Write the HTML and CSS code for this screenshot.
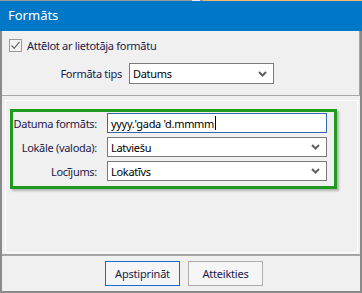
FILE: index.html
```html
<!DOCTYPE html>
<html lang="lv">
<head>
    <meta charset="UTF-8">
    <title>Formāts</title>
    <link rel="stylesheet" href="styles.css">
</head>
<body>
    <div class="strip"><span class="strip-mark"></span><span class="strip-orange"></span></div>
    <div class="titlebar">Formāts</div>
    <div class="frame">
        <div class="top">
            <label class="check-row">
                <span class="checkbox">
                    <svg width="11" height="11" viewBox="0 0 11 11"><polyline points="1.5,5.5 4.2,8.3 9.5,1.8" fill="none" stroke="#6d6d6d" stroke-width="1.3"/></svg>
                </span>
                Attēlot ar lietotāja formātu
            </label>
            <div class="type-row">
                <span class="label">Formāta tips</span>
                <div class="combo combo-type">
                    <span>Datums</span>
                    <svg class="chev" width="9" height="6" viewBox="0 0 9 6"><polyline points="1,1 4.5,4.5 8,1" fill="none" stroke="#606060" stroke-width="2"/></svg>
                </div>
            </div>
        </div>

        <div class="panel">
            <div class="green-box">
                <span class="label">Datuma formāts:</span>
                <div class="field focused">yyyy.'gada 'd.mmmm<span class="caret"></span></div>

                <span class="label">Lokāle (valoda):</span>
                <div class="combo">
                    <span>Latviešu</span>
                    <svg class="chev" width="9" height="6" viewBox="0 0 9 6"><polyline points="1,1 4.5,4.5 8,1" fill="none" stroke="#606060" stroke-width="2"/></svg>
                </div>

                <span class="label">Locījums:</span>
                <div class="combo">
                    <span>Lokatīvs</span>
                    <svg class="chev" width="9" height="6" viewBox="0 0 9 6"><polyline points="1,1 4.5,4.5 8,1" fill="none" stroke="#606060" stroke-width="2"/></svg>
                </div>
            </div>
        </div>

        <div class="buttons">
            <button class="btn btn-default">Apstiprināt</button>
            <button class="btn">Atteikties</button>
        </div>
    </div>
</body>
</html>
```

FILE: styles.css
```css
body {
    margin: 0;
    background: #f0f0f0;
    font-family: "Noto Sans", "Open Sans", sans-serif;
    font-size: 11px;
    letter-spacing: -0.3px;
    color: #1b1b4b;
    width: 362px;
    height: 293px;
    overflow: hidden;
}

.strip {
    height: 1px;
    background: #9a9a9a;
    display: flex;
}

.strip-mark {
    margin-left: 192px;
    width: 8px;
    background: #e8eef8;
}

.strip-orange {
    margin-left: 3px;
    flex: 1;
    background: #f3b86b;
}

.titlebar {
    height: 30px;
    line-height: 29px;
    background: #0078c8;
    color: #fff;
    font-size: 13px;
    letter-spacing: 0;
    padding-left: 8px;
}

.frame {
    border: 2px solid #8a8a8a;
    border-top: none;
    height: 260px;
}

.top {
    height: 65px;
    border-bottom: 1px solid #a6a6a6;
    border-right: 1px solid #a6a6a6;
    padding-top: 8px;
    box-sizing: border-box;
}

.check-row {
    display: flex;
    align-items: center;
    gap: 5px;
    padding-left: 7px;
    height: 13px;
    white-space: nowrap;
}

.checkbox {
    width: 11px;
    height: 11px;
    border: 1px solid #9b9b9b;
    background: #f4f4f4;
    display: flex;
}

.type-row {
    display: flex;
    align-items: center;
    margin-top: 11px;
    padding-left: 57px;
}

.label {
    white-space: nowrap;
}

.type-row .label {
    width: 63px;
    margin-right: 7px;
    text-align: right;
}

.combo,
.field {
    height: 19px;
    border: 1px solid #7a7a7a;
    background: #fff;
    color: #000;
    display: flex;
    align-items: center;
    padding: 0 6px 0 3px;
    white-space: nowrap;
}

.combo span {
    flex: 1;
}

.combo-type {
    width: 134px;
}

.panel {
    margin: 4px 2px 0 3px;
    height: 153px;
    border: 1px solid #fff;
    box-sizing: border-box;
    padding: 8px 0 0 4px;
}

.green-box {
    width: 314px;
    border: 3px solid #1e9b1e;
    box-shadow: 2px 2px 2px rgba(0, 0, 0, 0.25);
    display: grid;
    grid-template-columns: 84px 220px;
    column-gap: 10px;
    row-gap: 4px;
    padding: 1px 7px 5px 0;
    align-items: center;
}

.green-box .label {
    text-align: right;
}

.green-box .combo,
.green-box .field {
    height: 18px;
}

.field.focused {
    border-color: #3568a8;
}

.caret {
    display: inline-block;
    width: 1px;
    height: 14px;
    background: #000;
    margin-left: 1px;
}

.buttons {
    border-top: 2px solid #a6a6a6;
    margin-top: 1px;
    display: flex;
    justify-content: center;
    gap: 8px;
    padding: 5px 0 0 6px;
}

.btn {
    font-family: inherit;
    font-size: 11px;
    letter-spacing: -0.2px;
    color: #1b1b4b;
    width: 75px;
    height: 25px;
    background: #f5f5f5;
    border: 1px solid #adadad;
    padding: 0;
}

.btn-default {
    border-color: #0e6fd0;
}
```
